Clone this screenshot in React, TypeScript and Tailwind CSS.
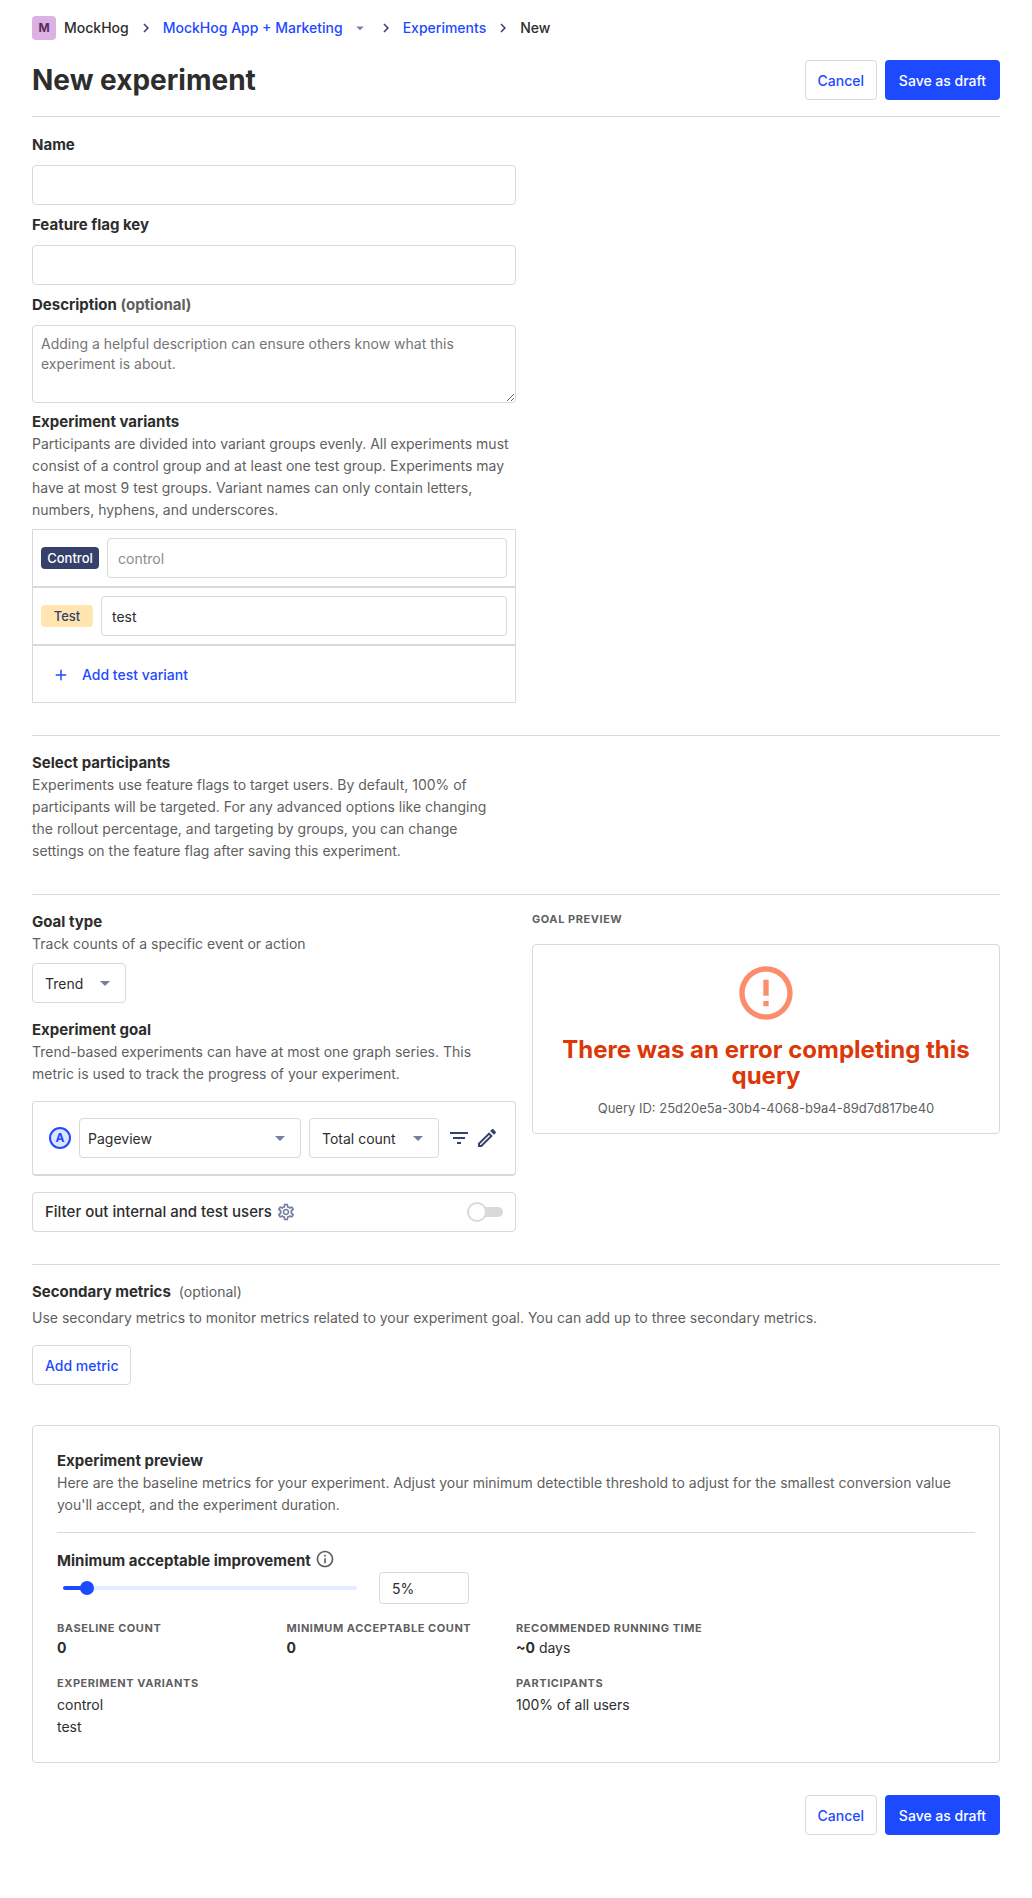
import React, { useState } from "react";
import {
  MdAdd,
  MdArrowDropDown,
  MdChevronRight,
  MdErrorOutline,
  MdFilterList,
  MdInfoOutline,
  MdOutlineEdit,
  MdOutlineSettings,
} from "react-icons/md";

const field = "h-10 w-full rounded border border-[#d9d9d9] bg-white text-sm outline-none";
const heading = "text-[15px] leading-[22px] font-bold";
const outlineButton = "h-10 rounded border border-[#d9d9d9] px-3 pt-0.5 text-sm font-medium text-[#1d4aff]";

function Actions() {
  return (
    <div className="flex gap-2">
      <button type="button" className={outlineButton}>Cancel</button>
      <button type="button" className="h-10 min-w-[115px] rounded bg-[#1d4aff] px-3 pt-0.5 text-sm font-medium text-white">Save as draft</button>
    </div>
  );
}

function Crumb() {
  return <MdChevronRight className="mx-2 size-[18px] text-[#35416b]" />;
}

type SelectProps = { id: string; label: string; options: string[]; className: string; pad: string };

function Select({ id, label, options, className, pad }: SelectProps) {
  return (
    <div className={"relative " + className}>
      <select id={id} aria-label={label} className={field + " appearance-none pt-0.5 " + pad}>
        {options.map((o) => <option key={o}>{o}</option>)}
      </select>
      <MdArrowDropDown className="pointer-events-none absolute top-2 right-[9px] size-6 text-[#747ea2]" />
    </div>
  );
}

function SmallTitle({ children }: { children: React.ReactNode }) {
  return <h4 className="text-[11px] leading-[17px] font-bold tracking-wider text-[#5f5f5f] uppercase">{children}</h4>;
}

function Metric({ title, className, children }: { title: string; className?: string; children: React.ReactNode }) {
  return (
    <div className={className}>
      <SmallTitle>{title}</SmallTitle>
      {children}
    </div>
  );
}

const MIN = 1;
const MAX = 50;

export default function App() {
  const [mde, setMde] = useState(5);
  const [filterTest, setFilterTest] = useState(false);
  return (
    <main className="min-h-screen bg-white px-8 pt-4 pb-16 font-['Inter',sans-serif] text-sm leading-[22px] text-[#2d2d2d]">
      <nav aria-label="Breadcrumb" className="flex h-6 items-center font-medium">
        <span className="mr-2 flex size-6 items-center justify-center rounded bg-[#dcb1e3] text-xs font-bold text-[#572e5e]">M</span>
        <span>MockHog</span>
        <Crumb />
        <button type="button" className="flex items-center text-[#1d4aff]">
          MockHog App + Marketing
          <MdArrowDropDown className="ml-2 size-[18px] text-[#747ea2]" />
        </button>
        <Crumb />
        <a href="#experiments" className="text-[#1d4aff]">Experiments</a>
        <Crumb />
        <span>New</span>
      </nav>

      <header className="mt-5 flex items-center justify-between border-b border-[#d9d9d9] pb-4">
        <h1 className="text-[28px] leading-8 font-bold">New experiment</h1>
        <Actions />
      </header>

      <form onSubmit={(e) => e.preventDefault()}>
        <section className="w-1/2 pt-[17px]">
          <label htmlFor="name" className={heading + " block"}>Name</label>
          <input id="name" className={field + " mt-[9px] px-2"} />
          <label htmlFor="key" className={heading + " mt-[9px] block"}>Feature flag key</label>
          <input id="key" className={field + " mt-[9px] px-2"} />
          <label htmlFor="description" className={heading + " mt-[9px] block"}>
            Description <span className="text-[#5f5f5f]">(optional)</span>
          </label>
          <textarea
            id="description"
            placeholder="Adding a helpful description can ensure others know what this experiment is about."
            className="mt-[9px] block h-[78px] w-full rounded border border-[#d9d9d9] px-2 py-2 leading-5 outline-none placeholder:text-[#757575]"
          />
          <h3 className={heading + " mt-2"}>Experiment variants</h3>
          <p className="text-[#5f5f5f]">
            Participants are divided into variant groups evenly. All experiments must consist of a control group and at least one test group. Experiments may have at most 9 test groups. Variant names can only contain letters, numbers, hyphens, and underscores.
          </p>
          <div className="mt-2">
            <div className="flex items-center gap-2 border border-[#d9d9d9] p-2">
              <span className="min-w-[58px] rounded bg-[#35416b] px-1 text-center text-[13px] leading-[22px] font-medium text-white">Control</span>
              <input aria-label="Control variant" disabled defaultValue="control" className={field + " min-w-0 flex-1 px-2.5 text-[#8c8c8c]"} />
            </div>
            <div className="flex items-center gap-2 border border-[#d9d9d9] p-2">
              <span className="min-w-[52px] rounded bg-[#ffe5b0] px-1 text-center text-[13px] leading-[22px] font-medium text-[#35416b]">Test</span>
              <input aria-label="Test variant" defaultValue="test" className={field + " min-w-0 flex-1 px-2.5"} />
            </div>
            <div className="border border-[#d9d9d9] p-2">
              <button type="button" className="flex h-10 items-center gap-3 px-[11px] pt-0.5 font-medium text-[#1d4aff]">
                <MdAdd className="size-[18px]" />
                Add test variant
              </button>
            </div>
          </div>
        </section>

        <section className="mt-8 border-t border-[#d9d9d9] pt-4">
          <div className="w-1/2 pr-4">
            <h3 className={heading}>Select participants</h3>
            <p className="text-[#5f5f5f]">
              Experiments use feature flags to target users. By default, 100% of participants will be targeted. For any advanced options like changing the rollout percentage, and targeting by groups, you can change settings on the feature flag after saving this experiment.
            </p>
          </div>
        </section>

        <section className="mt-8 grid grid-cols-2 border-t border-[#d9d9d9] pt-4">
          <div>
            <h3 className={heading}>Goal type</h3>
            <p className="text-[#5f5f5f]">Track counts of a specific event or action</p>
            <Select id="goal-type" label="Goal type" options={["Trend", "Funnel"]} className="mt-2 w-[94px]" pad="pl-3" />
            <h3 className={heading + " mt-4"}>Experiment goal</h3>
            <p className="text-[#5f5f5f]">
              Trend-based experiments can have at most one graph series. This metric is used to track the progress of your experiment.
            </p>
            <div className="mt-4 flex items-center gap-2 rounded border border-b-2 border-[#d9d9d9] p-4">
              <span className="flex size-[22px] shrink-0 items-center justify-center rounded-full border-2 border-[#1d4aff] bg-[#dde4ff] text-xs font-bold text-[#1d4aff]">A</span>
              <Select id="event" label="Event" options={["Pageview"]} className="min-w-0 flex-1" pad="pl-2" />
              <Select id="math" label="Aggregation" options={["Total count"]} className="w-[130px]" pad="pl-3" />
              <div className="flex gap-1 text-[#35416b]">
                <button type="button" aria-label="Filter"><MdFilterList className="size-6" /></button>
                <button type="button" aria-label="Rename"><MdOutlineEdit className="size-6" /></button>
              </div>
            </div>
            <div className="mt-4 flex h-10 items-center rounded border border-[#d9d9d9] px-3">
              <label htmlFor="filter-test" className="text-[15px] font-medium">Filter out internal and test users</label>
              <button type="button" aria-label="Settings" className="ml-1"><MdOutlineSettings className="size-5 text-[#747ea2]" /></button>
              <span className="relative ml-auto flex h-5 w-9 items-center">
                <input
                  id="filter-test"
                  type="checkbox"
                  role="switch"
                  checked={filterTest}
                  onChange={(e) => setFilterTest(e.target.checked)}
                  className="h-2.5 w-full appearance-none rounded-full bg-[#d9d9d9] before:absolute before:top-0 before:left-0 before:size-5 before:rounded-full before:border-2 before:border-[#d9d9d9] before:bg-white checked:before:left-4"
                />
              </span>
            </div>
          </div>

          <div className="pl-4">
            <SmallTitle>Goal Preview</SmallTitle>
            <div className="mt-4 rounded border border-[#d9d9d9] px-4 pt-4 pb-3.5 text-center">
              <MdErrorOutline className="mx-auto size-16 text-[#fb8d6c]" />
              <h2 className="mt-3 text-2xl leading-[26px] font-bold text-[#db3707]">There was an error completing this query</h2>
              <p className="mt-2 text-[13px] leading-[22px] text-[#5f5f5f]">Query ID: 25d20e5a-30b4-4068-b9a4-89d7d817be40</p>
            </div>
          </div>
        </section>

        <section className="mt-8 border-t border-[#d9d9d9] pt-4">
          <div className="flex items-center gap-2">
            <h3 className={heading}>Secondary metrics</h3>
            <span className="text-[#5f5f5f]">(optional)</span>
          </div>
          <p className="mt-1 text-[#5f5f5f]">Use secondary metrics to monitor metrics related to your experiment goal. You can add up to three secondary metrics.</p>
          <button type="button" className={outlineButton + " mt-4"}>Add metric</button>
        </section>

        <section className="mt-10 rounded border border-[#d9d9d9] p-6">
          <h3 className={heading}>Experiment preview</h3>
          <p className="text-[#5f5f5f]">
            Here are the baseline metrics for your experiment. Adjust your minimum detectible threshold to adjust for the smallest conversion value you'll accept, and the experiment duration.
          </p>
          <hr className="my-4 border-[#d9d9d9]" />
          <div className="flex h-[23px] items-center gap-1">
            <label htmlFor="mde" className={heading}>Minimum acceptable improvement</label>
            <MdInfoOutline className="mb-1 size-5 text-[#5f5f5f]" />
          </div>
          <div className="flex items-center">
            <div className="w-1/3 px-1.5">
              <div className="relative h-1 rounded-full bg-[#e4eaff]">
                <div className="h-1 rounded-full bg-[#1d4aff]" style={{ width: `${((mde - MIN) / (MAX - MIN)) * 100}%` }} />
                <input
                  id="mde"
                  type="range"
                  min={MIN}
                  max={MAX}
                  value={mde}
                  onChange={(e) => setMde(Number(e.target.value))}
                  className="absolute -top-[5px] -left-[7px] h-3.5 w-[calc(100%+14px)] appearance-none bg-transparent [&::-webkit-slider-thumb]:size-3.5 [&::-webkit-slider-thumb]:appearance-none [&::-webkit-slider-thumb]:rounded-full [&::-webkit-slider-thumb]:bg-[#1d4aff]"
                />
              </div>
            </div>
            <input
              aria-label="Minimum acceptable improvement percent"
              value={mde + "%"}
              readOnly
              className="ml-4 h-8 w-[90px] rounded border border-[#d9d9d9] px-3 outline-none"
            />
          </div>
          <div className="mt-4 grid grid-cols-4 gap-y-4">
            <Metric title="Baseline Count"><p className="font-bold">0</p></Metric>
            <Metric title="Minimum Acceptable Count"><p className="font-bold">0</p></Metric>
            <Metric title="Recommended running time" className="col-span-2"><p><b className="font-bold">~0</b> days</p></Metric>
            <Metric title="Experiment variants" className="col-span-2"><ul className="mt-0.5"><li>control</li><li>test</li></ul></Metric>
            <Metric title="Participants" className="col-span-2"><p className="mt-0.5">100% of all users</p></Metric>
          </div>
        </section>

        <div className="mt-8 flex justify-end"><Actions /></div>
      </form>
    </main>
  );
}
